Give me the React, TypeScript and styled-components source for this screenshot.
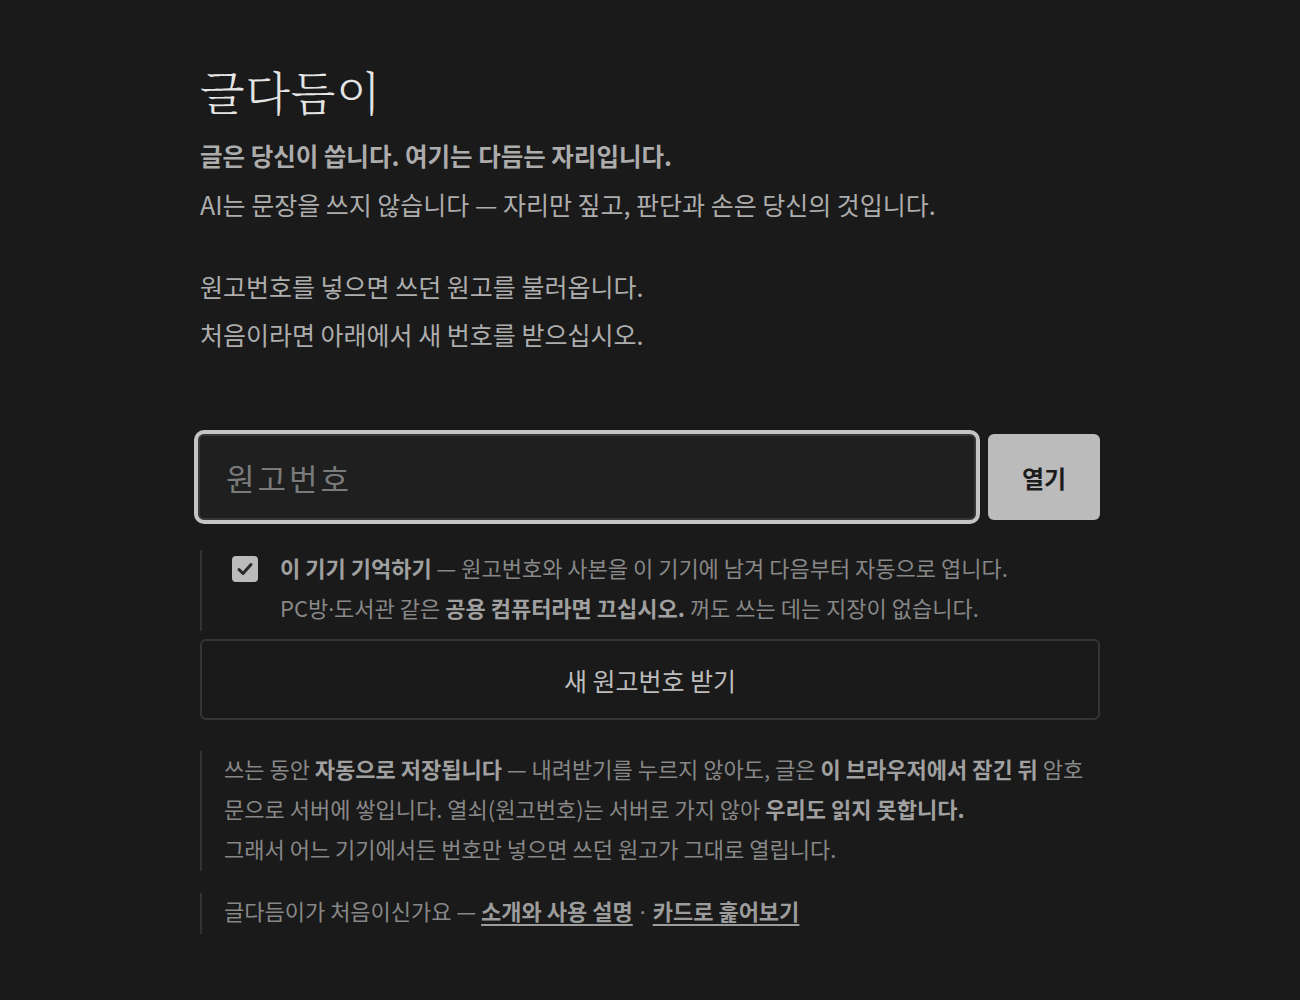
import { useState } from 'react';
import styled, { createGlobalStyle } from 'styled-components';

const GlobalStyle = createGlobalStyle`
  html, body {
    margin: 0;
    padding: 0;
    background: #1a1a1a;
  }
  body {
    font-family: "Noto Sans CJK KR", "Noto Sans", sans-serif;
    color: #b4b4b4;
  }
`;

const Page = styled.main`
  width: 900px;
  margin: 0 auto;
  padding-top: 60px;
  padding-bottom: 60px;
`;

const Title = styled.h1`
  margin: 0 0 12px;
  font-family: "Noto Serif CJK KR", "Noto Sans CJK KR", serif;
  font-weight: 300;
  font-size: 46px;
  line-height: 60px;
  color: #e4e4e4;
  letter-spacing: 1px;
`;

const Lead = styled.p`
  margin: 0;
  font-size: 24.5px;
  line-height: 48px;
  font-weight: 700;
  color: #acacac;
`;

const Text = styled.p<{ $gapBelow?: number }>`
  margin: 0 0 ${(p) => p.$gapBelow ?? 0}px;
  font-size: 25px;
  line-height: 48px;
  color: #adadad;
`;

const OpenRow = styled.form`
  display: flex;
  gap: 12px;
  margin-top: 76px;
  align-items: center;
`;

const CodeInput = styled.input`
  flex: 1;
  box-sizing: border-box;
  height: 86px;
  margin-left: -2px;
  padding: 0 26px;
  background: #1f1f1f;
  border: 2px solid #383838;
  border-radius: 6px;
  outline: 4px solid #c4c4c4;
  outline-offset: 0;
  font-family: inherit;
  font-size: 31px;
  letter-spacing: 3px;
  color: #ddd;

  &::placeholder {
    color: #7a7a7a;
  }
`;

const OpenButton = styled.button`
  width: 112px;
  height: 86px;
  border: none;
  border-radius: 6px;
  background: #bbbbbb;
  color: #1c1c1c;
  font-family: inherit;
  font-size: 24px;
  font-weight: 700;
  cursor: pointer;
`;

const Aside = styled.div<{ $indent: number }>`
  display: flow-root;
  border-left: 2px solid #333;
  padding-left: ${(p) => p.$indent}px;
  font-size: 22px;
  line-height: 40px;
  color: #888888;

  b {
    font-weight: 700;
    color: #a0a0a0;
  }
`;

const Lines = styled.div`
  margin-top: -3px;
  margin-bottom: 3px;
`;

const RememberBlock = styled(Aside)`
  margin-top: 30px;
  display: flex;
  align-items: flex-start;
  gap: 22px;
`;

const CheckLabel = styled.label`
  position: relative;
  flex: 0 0 auto;
  width: 26px;
  height: 26px;
  margin-top: 6px;
  border-radius: 4px;
  background: #bbbbbb;
  display: flex;
  align-items: center;
  justify-content: center;
  cursor: pointer;

  input {
    position: absolute;
    opacity: 0;
    inset: 0;
    margin: 0;
  }
`;

const Dot = styled.span`
  font-family: "Noto Sans", sans-serif;
`;

const NewButton = styled.button`
  display: block;
  width: 100%;
  height: 81px;
  margin-top: 8px;
  border: 2px solid #353535;
  border-radius: 6px;
  background: transparent;
  color: #bdbdbd;
  font-family: inherit;
  font-size: 25px;
  cursor: pointer;
`;

const InfoBlock = styled(Aside)`
  margin-top: 31px;
`;

const FooterBlock = styled(Aside)`
  margin-top: 22px;
`;

const Link = styled.a`
  color: #9c9c9c;
  font-weight: 700;
  text-decoration: underline;
  text-underline-offset: 4px;
  text-decoration-thickness: 2px;
`;

const Sep = styled.span`
  margin: 0 7px;
  font-family: "Noto Sans", sans-serif;
`;

export default function App() {
  const [remember, setRemember] = useState(true);

  return (
    <>
      <GlobalStyle />
      <Page>
        <Title>글다듬이</Title>
        <Lead>글은 당신이 씁니다. 여기는 다듬는 자리입니다.</Lead>
        <Text $gapBelow={34}>
          AI는 문장을 쓰지 않습니다 — 자리만 짚고, 판단과 손은 당신의 것입니다.
        </Text>
        <Text>원고번호를 넣으면 쓰던 원고를 불러옵니다.</Text>
        <Text>처음이라면 아래에서 새 번호를 받으십시오.</Text>

        <OpenRow onSubmit={(e) => e.preventDefault()}>
          <CodeInput placeholder="원고번호" />
          <OpenButton type="submit">열기</OpenButton>
        </OpenRow>

        <RememberBlock $indent={30}>
          <CheckLabel>
            <input
              type="checkbox"
              checked={remember}
              onChange={(e) => setRemember(e.target.checked)}
            />
            {remember && (
              <svg width="18" height="18" viewBox="0 0 18 18">
                <path
                  d="M3 9.5 L7 13.5 L15 4.5"
                  fill="none"
                  stroke="#2a2a2a"
                  strokeWidth="3"
                  strokeLinecap="round"
                  strokeLinejoin="round"
                />
              </svg>
            )}
          </CheckLabel>
          <Lines>
            <b>이 기기 기억하기</b> — 원고번호와 사본을 이 기기에 남겨 다음부터 자동으로 엽니다.
            <br />
            PC방<Dot>·</Dot>도서관 같은 <b>공용 컴퓨터라면 끄십시오.</b> 꺼도 쓰는 데는 지장이 없습니다.
          </Lines>
        </RememberBlock>

        <NewButton type="button">새 원고번호 받기</NewButton>

        <InfoBlock $indent={22}>
          <Lines>
            쓰는 동안 <b>자동으로 저장됩니다</b> — 내려받기를 누르지 않아도, 글은 <b>이 브라우저에서 잠긴 뒤</b> 암호문으로 서버에 쌓입니다. 열쇠(원고번호)는 서버로 가지 않아 <b>우리도 읽지 못합니다.</b>
            <br />
            그래서 어느 기기에서든 번호만 넣으면 쓰던 원고가 그대로 열립니다.
          </Lines>
        </InfoBlock>

        <FooterBlock $indent={22}>
          <Lines>
            글다듬이가 처음이신가요 — <Link href="#">소개와 사용 설명</Link>
            <Sep>·</Sep>
            <Link href="#">카드로 훑어보기</Link>
          </Lines>
        </FooterBlock>
      </Page>
    </>
  );
}
